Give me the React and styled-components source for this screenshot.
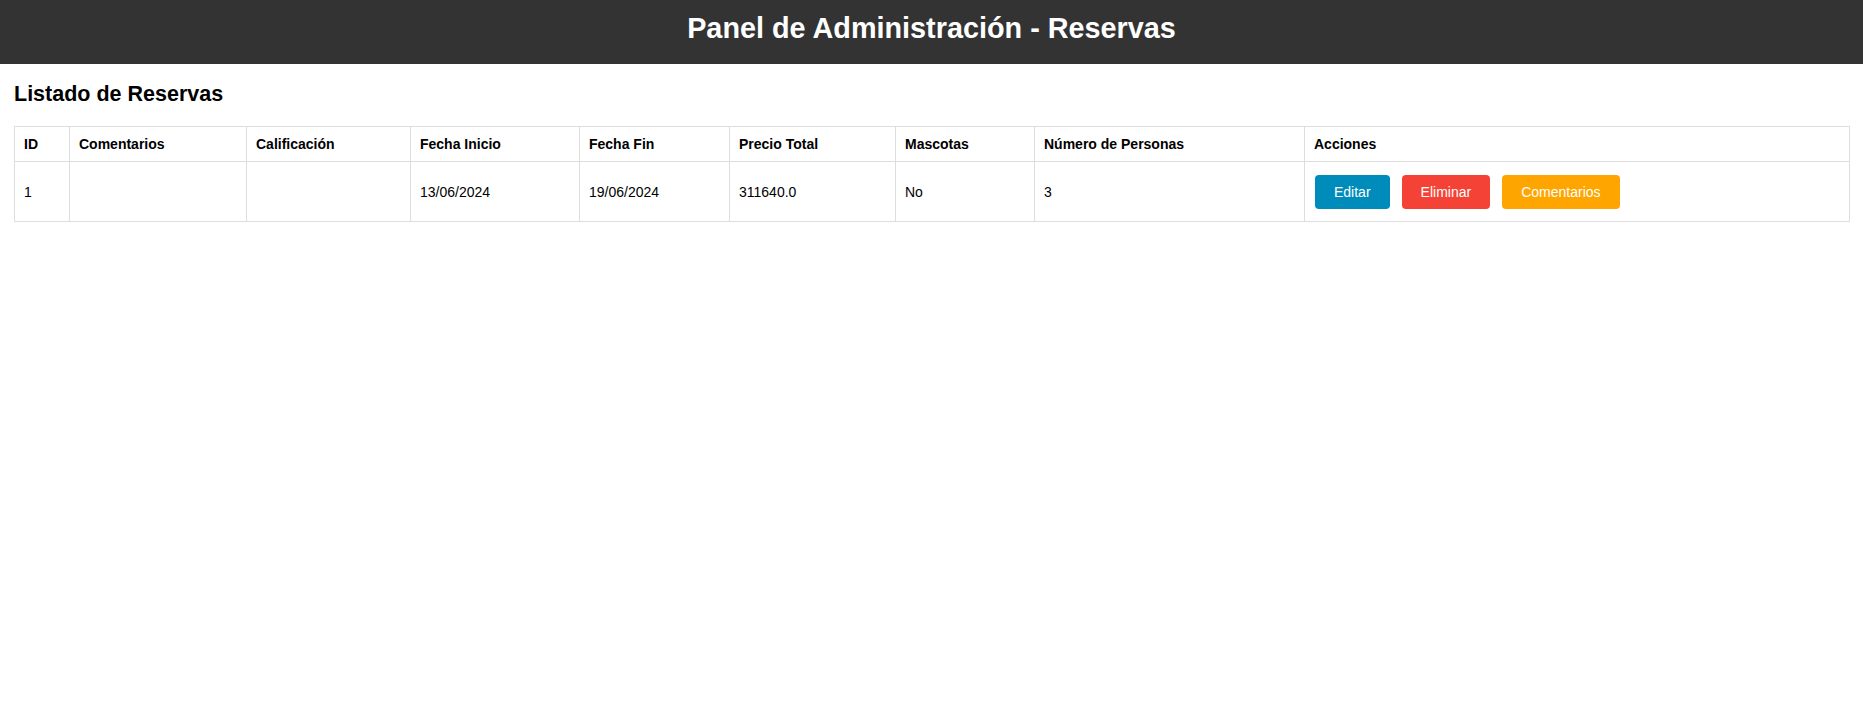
import React from "react";
import styled, { createGlobalStyle } from "styled-components";

const GlobalStyle = createGlobalStyle`
  html, body { margin: 0; padding: 0; background: #fff; }
  body { font-family: "Liberation Sans", Arial, sans-serif; color: #000; }
`;

const Header = styled.header`
  background: #333;
  color: #fff;
  height: 64px;
  box-sizing: border-box;
  padding-top: 12px;
  text-align: center;
`;

const Title = styled.h1`
  margin: 0;
  font-size: 28.8px;
  line-height: 33px;
  font-weight: bold;
`;

const Main = styled.main`
  padding: 0 14px;
`;

const SectionTitle = styled.h2`
  margin: 18px 0 20px;
  font-size: 21.5px;
  line-height: 24px;
  font-weight: bold;
`;

const Table = styled.table`
  width: 100%;
  border-collapse: collapse;
  table-layout: fixed;
  font-size: 14px;
`;

const Th = styled.th`
  border: 1px solid #ddd;
  padding: 9px 9px;
  text-align: left;
  font-weight: bold;
  line-height: 16px;
`;

const Td = styled.td`
  border: 1px solid #ddd;
  padding: 9px 9px;
  text-align: left;
  line-height: 16px;
  vertical-align: middle;
  height: 41px;
`;

const Actions = styled.div`
  display: flex;
  gap: 12px;
  margin: 4px 0 3px 1px;
`;

const Button = styled.button`
  background: ${(p) => p.$bg};
  color: #fff;
  border: none;
  border-radius: 4px;
  height: 34px;
  padding: 0 19px;
  font-family: "Liberation Sans", Arial, sans-serif;
  font-size: 14px;
  cursor: pointer;
`;

const columns = [
  { label: "ID", width: 55 },
  { label: "Comentarios", width: 177 },
  { label: "Calificación", width: 164 },
  { label: "Fecha Inicio", width: 169 },
  { label: "Fecha Fin", width: 150 },
  { label: "Precio Total", width: 166 },
  { label: "Mascotas", width: 139 },
  { label: "Número de Personas", width: 270 },
  { label: "Acciones", width: 545 },
];

const reservas = [
  {
    id: 1,
    comentarios: "",
    calificacion: "",
    inicio: "13/06/2024",
    fin: "19/06/2024",
    precio: "311640.0",
    mascotas: "No",
    personas: 3,
  },
];

export default function App() {
  return (
    <>
      <GlobalStyle />
      <Header>
        <Title>Panel de Administración - Reservas</Title>
      </Header>
      <Main>
        <SectionTitle>Listado de Reservas</SectionTitle>
        <Table>
          <colgroup>
            {columns.map((c) => (
              <col key={c.label} style={{ width: c.width }} />
            ))}
          </colgroup>
          <thead>
            <tr>
              {columns.map((c) => (
                <Th key={c.label}>{c.label}</Th>
              ))}
            </tr>
          </thead>
          <tbody>
            {reservas.map((r) => (
              <tr key={r.id}>
                <Td>{r.id}</Td>
                <Td>{r.comentarios}</Td>
                <Td>{r.calificacion}</Td>
                <Td>{r.inicio}</Td>
                <Td>{r.fin}</Td>
                <Td>{r.precio}</Td>
                <Td>{r.mascotas}</Td>
                <Td>{r.personas}</Td>
                <Td>
                  <Actions>
                    <Button $bg="#008cba">Editar</Button>
                    <Button $bg="#f44336">Eliminar</Button>
                    <Button $bg="#ffa500">Comentarios</Button>
                  </Actions>
                </Td>
              </tr>
            ))}
          </tbody>
        </Table>
      </Main>
    </>
  );
}
